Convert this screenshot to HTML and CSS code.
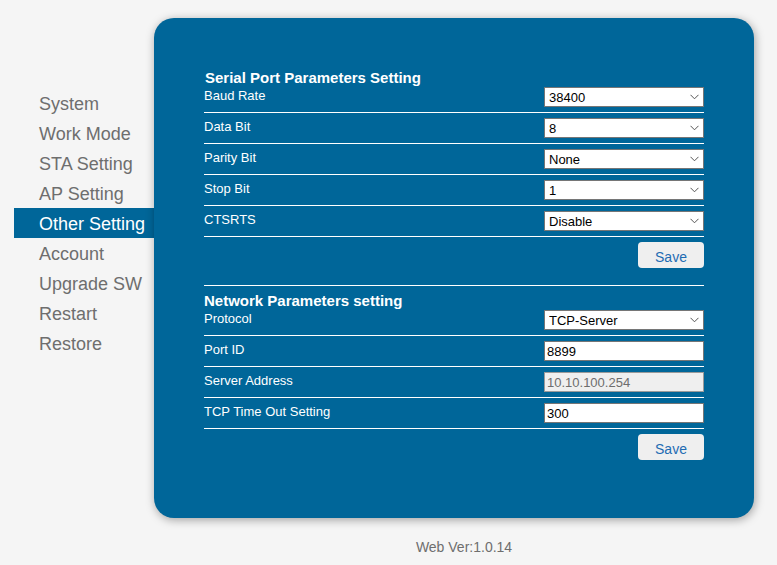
FILE: index.html
```html
<!DOCTYPE html>
<html>
<head>
<meta charset="utf-8">
<link rel="stylesheet" href="styles.css">
</head>
<body>
<div class="page">
  <ul class="menu">
    <li class="menu-item">System</li>
    <li class="menu-item">Work Mode</li>
    <li class="menu-item">STA Setting</li>
    <li class="menu-item">AP Setting</li>
    <li class="menu-item active">Other Setting</li>
    <li class="menu-item">Account</li>
    <li class="menu-item">Upgrade SW</li>
    <li class="menu-item">Restart</li>
    <li class="menu-item">Restore</li>
  </ul>
  <div class="main">
    <div class="panel">
      <div class="section-title">Serial Port Parameters Setting</div>
      <div class="row">
        <span class="label">Baud Rate</span>
        <div class="select-wrap">
          <select class="ctrl"><option>38400</option></select>
          <svg class="chev" width="9" height="6" viewBox="0 0 9 6"><path d="M0.5 0.8 L4.5 4.8 L8.5 0.8" fill="none" stroke="#555" stroke-width="1"/></svg>
        </div>
      </div>
      <div class="row">
        <span class="label">Data Bit</span>
        <div class="select-wrap">
          <select class="ctrl"><option>8</option></select>
          <svg class="chev" width="9" height="6" viewBox="0 0 9 6"><path d="M0.5 0.8 L4.5 4.8 L8.5 0.8" fill="none" stroke="#555" stroke-width="1"/></svg>
        </div>
      </div>
      <div class="row">
        <span class="label">Parity Bit</span>
        <div class="select-wrap">
          <select class="ctrl"><option>None</option></select>
          <svg class="chev" width="9" height="6" viewBox="0 0 9 6"><path d="M0.5 0.8 L4.5 4.8 L8.5 0.8" fill="none" stroke="#555" stroke-width="1"/></svg>
        </div>
      </div>
      <div class="row">
        <span class="label">Stop Bit</span>
        <div class="select-wrap">
          <select class="ctrl"><option>1</option></select>
          <svg class="chev" width="9" height="6" viewBox="0 0 9 6"><path d="M0.5 0.8 L4.5 4.8 L8.5 0.8" fill="none" stroke="#555" stroke-width="1"/></svg>
        </div>
      </div>
      <div class="row">
        <span class="label">CTSRTS</span>
        <div class="select-wrap">
          <select class="ctrl"><option>Disable</option></select>
          <svg class="chev" width="9" height="6" viewBox="0 0 9 6"><path d="M0.5 0.8 L4.5 4.8 L8.5 0.8" fill="none" stroke="#555" stroke-width="1"/></svg>
        </div>
      </div>
      <div class="actions"><button class="save">Save</button></div>
      <div class="divider"></div>
      <div class="section-title second">Network Parameters setting</div>
      <div class="row">
        <span class="label">Protocol</span>
        <div class="select-wrap">
          <select class="ctrl"><option>TCP-Server</option></select>
          <svg class="chev" width="9" height="6" viewBox="0 0 9 6"><path d="M0.5 0.8 L4.5 4.8 L8.5 0.8" fill="none" stroke="#555" stroke-width="1"/></svg>
        </div>
      </div>
      <div class="row">
        <span class="label">Port ID</span>
        <input class="ctrl input" type="text" value="8899">
      </div>
      <div class="row">
        <span class="label">Server Address</span>
        <input class="ctrl input" type="text" value="10.10.100.254" disabled>
      </div>
      <div class="row">
        <span class="label">TCP Time Out Setting</span>
        <input class="ctrl input" type="text" value="300">
      </div>
      <div class="actions"><button class="save">Save</button></div>
    </div>
    <div class="footer">Web Ver:1.0.14</div>
  </div>
</div>
</body>
</html>
```

FILE: styles.css
```css
* { box-sizing: border-box; }
html, body {
  margin: 0;
  padding: 0;
  background: #f5f5f5;
  font-family: "Liberation Sans", Arial, sans-serif;
}
.page {
  display: flex;
  align-items: flex-start;
  padding-left: 14px;
}
.menu {
  list-style: none;
  margin: 88px 0 0 0;
  padding: 0;
  width: 140px;
}
.menu-item {
  height: 30px;
  line-height: 32px;
  padding-left: 25px;
  font-size: 18px;
  color: #6e6e6e;
  white-space: nowrap;
  overflow: hidden;
}
.menu-item.active {
  background: #006699;
  color: #ffffff;
}
.main {
  margin-top: 18px;
  width: 600px;
}
.panel {
  width: 600px;
  height: 500px;
  background: #006699;
  border-radius: 20px;
  box-shadow: 1px 2px 10px rgba(0, 0, 0, 0.35);
  padding: 52px 50px 0 51px;
  color: #ffffff;
}
.section-title {
  font-size: 15px;
  font-weight: bold;
  line-height: 16px;
  margin-bottom: -4px;
}
.section-title.second {
  margin-top: 7px;
  margin-left: -1px;
}
.row {
  height: 31px;
  border-bottom: 1px solid #ffffff;
  display: flex;
  align-items: center;
  justify-content: space-between;
  padding-bottom: 1px;
  margin-left: -1px;
}
.label {
  font-size: 13px;
  position: relative;
  top: -1px;
}
.select-wrap {
  position: relative;
  width: 160px;
  height: 20px;
}
.ctrl {
  width: 160px;
  height: 20px;
  border: 1px solid #767676;
  border-radius: 0;
  background: #ffffff;
  color: #000000;
  font-family: "Liberation Sans", Arial, sans-serif;
  font-size: 13px;
  margin: 0;
  outline: none;
}
select.ctrl {
  -webkit-appearance: none;
  appearance: none;
  padding: 1px 0 0 4px;
}
.input {
  padding: 1px 0 0 2px;
}
.input:disabled {
  background: #efefef;
  color: #6d6d6d;
  border-color: #9a9a9a;
}
.chev {
  position: absolute;
  right: 5px;
  top: 7px;
  pointer-events: none;
}
.actions {
  display: flex;
  justify-content: flex-end;
  margin-top: 5px;
}
.save {
  width: 66px;
  height: 26px;
  border: none;
  border-radius: 4px;
  background: #efefef;
  color: #1f6cb3;
  font-family: "Liberation Sans", Arial, sans-serif;
  font-size: 14px;
  padding: 4px 0 0 0;
}
.divider {
  height: 1px;
  background: #ffffff;
  margin-top: 17px;
  margin-left: -1px;
}
.footer {
  margin-top: 21px;
  padding-left: 20px;
  text-align: center;
  font-size: 14px;
  line-height: 16px;
  color: #6e6e6e;
}
```
